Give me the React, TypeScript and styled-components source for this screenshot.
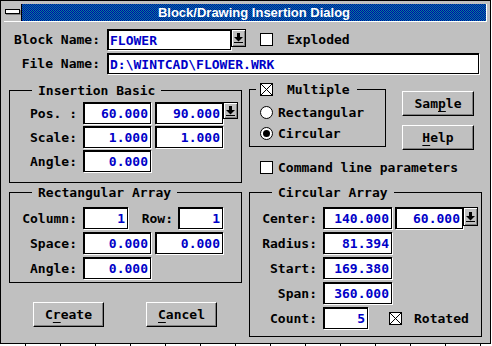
import styled, { createGlobalStyle } from "styled-components";

const GlobalStyle = createGlobalStyle`
  html, body {
    margin: 0;
    padding: 0;
    background: #ffffff;
  }
  body {
    font-family: "DejaVu Sans Mono", "Liberation Mono", monospace;
    font-weight: bold;
    font-size: 13px;
    color: #000;
  }
`;

const Window = styled.div`
  box-sizing: border-box;
  width: 491px;
  height: 344px;
  padding: 3px;
  background: #c0c0c0;
  border: 1px solid #000;
  display: flex;
  flex-direction: column;
`;

// ruler ticks of the app window behind the dialog
const Ruler = styled.div`
  width: 491px;
  height: 2px;
  background: repeating-linear-gradient(
    90deg,
    transparent 0 25px,
    #000 25px 26px,
    transparent 26px 35px
  );
`;

const TitleBar = styled.div`
  display: flex;
  height: 18px;
  box-sizing: border-box;
  border-right: 1px solid #fff;
  border-bottom: 1px solid #fff;
`;

const SysButton = styled.div`
  width: 18px;
  flex: none;
  background: #c0c0c0;
  border-right: 1px solid #000;
  box-sizing: border-box;
  display: flex;
  align-items: center;
  justify-content: center;
  padding-bottom: 2px;
`;

const SysBar = styled.div`
  width: 13px;
  height: 3px;
  background: #fff;
  border: 1px solid #000;
  box-shadow: 1px 1px 0 #808080;
`;

const Caption = styled.div`
  flex: 1;
  display: flex;
  align-items: center;
  justify-content: center;
  color: #fff;
  font-family: "Liberation Sans", Arial, sans-serif;
  font-weight: bold;
  font-size: 13px;
  background-color: #0000b0;
  background-image: conic-gradient(
    #008890 25%,
    transparent 0 50%,
    #008890 0 75%,
    transparent 0
  );
  background-size: 2px 2px;
`;

const Body = styled.div`
  flex: 1;
  padding-top: 7px;
  display: flex;
  flex-direction: column;
`;

const TopRow = styled.div`
  display: flex;
  align-items: flex-start;
  height: 21px;
  & + & {
    margin-top: 3px;
  }
`;

const Label = styled.div<{ $w: number; $gap?: number }>`
  width: ${(p) => p.$w}px;
  margin-right: ${(p) => p.$gap ?? 6}px;
  text-align: right;
  white-space: pre;
  flex: none;
  align-self: center;
`;

const Field = styled.div<{ $w: number; $right?: boolean }>`
  box-sizing: border-box;
  width: ${(p) => p.$w}px;
  height: 100%;
  flex: none;
  background: #fff;
  color: #0000c8;
  border: 1px solid #000;
  box-shadow: inset 1px 1px 0 #000, 1px 1px 0 #fff;
  display: flex;
  align-items: center;
  justify-content: ${(p) => (p.$right ? "flex-end" : "flex-start")};
  padding: ${(p) => (p.$right ? "1px 2px 0 0" : "1px 0 0 2px")};
  white-space: pre;
`;

const DropButton = styled.div<{ $h?: number }>`
  box-sizing: border-box;
  width: 15px;
  height: ${(p) => p.$h ?? 18}px;
  flex: none;
  background: #c0c0c0;
  border: 1px solid #000;
  box-shadow: inset 1px 1px 0 #fff, inset -1px -1px 0 #808080;
  display: flex;
  align-items: center;
  justify-content: center;
`;

const Box = styled.span<{ $ml?: number }>`
  box-sizing: border-box;
  width: 13px;
  height: 13px;
  flex: none;
  background: #fff;
  border: 1px solid #000;
  margin-left: ${(p) => p.$ml ?? 0}px;
  display: inline-flex;
  align-self: center;
`;

const BoxText = styled.span<{ $ml: number }>`
  margin-left: ${(p) => p.$ml}px;
  align-self: center;
  white-space: pre;
`;

const Radio = styled.span<{ $on?: boolean }>`
  box-sizing: border-box;
  width: 13px;
  height: 13px;
  flex: none;
  border-radius: 50%;
  background: #fff;
  border: 1px solid #000;
  display: inline-flex;
  align-items: center;
  justify-content: center;
  &::after {
    content: "";
    width: 7px;
    height: 7px;
    border-radius: 50%;
    background: ${(p) => (p.$on ? "#000" : "transparent")};
  }
`;

const Columns = styled.div`
  display: flex;
  margin-top: 8px;
  padding-left: 5px;
  gap: 7px;
`;

const LeftCol = styled.div`
  width: 233px;
  display: flex;
  flex-direction: column;
`;

const RightCol = styled.div`
  width: 233px;
  display: flex;
  flex-direction: column;
`;

const Group = styled.fieldset<{ $mt?: number; $w?: number }>`
  margin: ${(p) => p.$mt ?? 0}px 0 0 0;
  padding: 0;
  min-width: 0;
  width: ${(p) => (p.$w ? `${p.$w}px` : "auto")};
  box-sizing: border-box;
  border: 1px solid #000;
`;

const Legend = styled.legend<{ $ml?: number }>`
  margin-left: ${(p) => p.$ml ?? 22}px;
  padding: 0 6px;
  line-height: 15px;
  height: 15px;
  display: flex;
  align-items: center;
  white-space: pre;
`;

const GroupBody = styled.div<{ $pt: number; $pb: number; $gap: number }>`
  display: flex;
  flex-direction: column;
  gap: ${(p) => p.$gap}px;
  padding-top: ${(p) => p.$pt}px;
  padding-bottom: ${(p) => p.$pb}px;
`;

const Row = styled.div<{ $h?: number; $gap?: number }>`
  display: flex;
  align-items: flex-start;
  height: ${(p) => p.$h ?? 22}px;
  gap: ${(p) => p.$gap ?? 0}px;
`;

const OptionRow = styled.div`
  display: flex;
  align-items: center;
  height: 16px;
  padding-left: 10px;
  gap: 5px;
`;

const PushButton = styled.button<{ $w: number }>`
  box-sizing: border-box;
  width: ${(p) => p.$w}px;
  height: 25px;
  padding: 0;
  background: #c0c0c0;
  font: inherit;
  color: #000;
  border-top: 1px solid #fff;
  border-left: 1px solid #fff;
  border-right: 1px solid #000;
  border-bottom: 1px solid #000;
  box-shadow: inset -1px -1px 0 #808080;
  u {
    text-underline-offset: 3px;
  }
`;

const ButtonRow = styled.div`
  display: flex;
  gap: 42px;
  margin-top: 19px;
  padding-left: 24px;
`;

const TopSection = styled.div`
  display: flex;
  align-items: flex-start;
`;

const SideButtons = styled.div`
  display: flex;
  flex-direction: column;
  gap: 9px;
  margin: 9px 0 0 16px;
`;

const CmdRow = styled.div`
  display: flex;
  height: 13px;
  margin-top: 11px;
  padding-left: 11px;
`;

function DropGlyph() {
  return (
    <svg width="9" height="10" viewBox="0 0 9 10">
      <rect x="3" y="0" width="3" height="4" fill="#000" />
      <polygon points="0,4 9,4 4.5,8.5" fill="#000" />
      <rect x="0" y="9" width="9" height="1" fill="#000" />
    </svg>
  );
}

function Cross() {
  return (
    <svg width="11" height="11" viewBox="0 0 11 11">
      <path d="M0 0L11 11M11 0L0 11" stroke="#000" strokeWidth="1" />
    </svg>
  );
}

export default function App() {
  return (
    <>
      <GlobalStyle />
      <Window>
        <TitleBar>
          <SysButton>
            <SysBar />
          </SysButton>
          <Caption>Block/Drawing Insertion Dialog</Caption>
        </TitleBar>
        <Body>
          <TopRow>
            <Label $w={96} $gap={7}>Block Name:</Label>
            <Field $w={124}>FLOWER</Field>
            <DropButton>
              <DropGlyph />
            </DropButton>
            <Box $ml={14} />
            <BoxText $ml={14}>Exploded</BoxText>
          </TopRow>
          <TopRow>
            <Label $w={96} $gap={7}>File Name:</Label>
            <Field $w={372}>D:\WINTCAD\FLOWER.WRK</Field>
          </TopRow>

          <Columns>
            <LeftCol>
              <Group $mt={1}>
                <Legend>Insertion Basic</Legend>
                <GroupBody $pt={4} $pb={10} $gap={2}>
                  <Row>
                    <Label $w={67}>Pos. :</Label>
                    <Field $w={68} $right>60.000</Field>
                    <Field $w={68} $right style={{ marginLeft: 4 }}>90.000</Field>
                    <DropButton $h={17}>
                      <DropGlyph />
                    </DropButton>
                  </Row>
                  <Row>
                    <Label $w={67}>Scale:</Label>
                    <Field $w={68} $right>1.000</Field>
                    <Field $w={68} $right style={{ marginLeft: 4 }}>1.000</Field>
                  </Row>
                  <Row>
                    <Label $w={67}>Angle:</Label>
                    <Field $w={68} $right>0.000</Field>
                  </Row>
                </GroupBody>
              </Group>

              <Group $mt={2}>
                <Legend>Rectangular Array</Legend>
                <GroupBody $pt={7} $pb={3} $gap={3}>
                  <Row>
                    <Label $w={67}>Column:</Label>
                    <Field $w={45} $right>1</Field>
                    <Label $w={45} $gap={5}>Row:</Label>
                    <Field $w={45} $right>1</Field>
                  </Row>
                  <Row>
                    <Label $w={67}>Space:</Label>
                    <Field $w={68} $right>0.000</Field>
                    <Field $w={68} $right style={{ marginLeft: 4 }}>0.000</Field>
                  </Row>
                  <Row>
                    <Label $w={67}>Angle:</Label>
                    <Field $w={68} $right>0.000</Field>
                  </Row>
                </GroupBody>
              </Group>

              <ButtonRow>
                <PushButton $w={71}>
                  C<u>r</u>eate
                </PushButton>
                <PushButton $w={71}>
                  <u>C</u>ancel
                </PushButton>
              </ButtonRow>
            </LeftCol>

            <RightCol>
              <TopSection>
                <Group $w={137}>
                  <Legend $ml={6} style={{ paddingLeft: 4, paddingRight: 7 }}>
                    <Box>
                      <Cross />
                    </Box>
                    <BoxText $ml={14}>Multiple</BoxText>
                  </Legend>
                  <GroupBody $pt={7} $pb={5} $gap={5}>
                    <OptionRow>
                      <Radio />
                      Rectangular
                    </OptionRow>
                    <OptionRow>
                      <Radio $on />
                      Circular
                    </OptionRow>
                  </GroupBody>
                </Group>
                <SideButtons>
                  <PushButton $w={72}>
                    Sam<u>p</u>le
                  </PushButton>
                  <PushButton $w={72}>
                    <u>H</u>elp
                  </PushButton>
                </SideButtons>
              </TopSection>

              <CmdRow>
                <Box />
                <BoxText $ml={5}>Command line parameters</BoxText>
              </CmdRow>

              <Group $mt={11}>
                <Legend $ml={22}>Circular Array</Legend>
                <GroupBody $pt={7} $pb={7} $gap={3}>
                  <Row>
                    <Label $w={67}>Center:</Label>
                    <Field $w={69} $right>140.000</Field>
                    <Field $w={68} $right style={{ marginLeft: 3 }}>60.000</Field>
                    <DropButton $h={19}>
                      <DropGlyph />
                    </DropButton>
                  </Row>
                  <Row>
                    <Label $w={67}>Radius:</Label>
                    <Field $w={69} $right>81.394</Field>
                  </Row>
                  <Row>
                    <Label $w={67}>Start:</Label>
                    <Field $w={69} $right>169.380</Field>
                  </Row>
                  <Row>
                    <Label $w={67}>Span:</Label>
                    <Field $w={69} $right>360.000</Field>
                  </Row>
                  <Row>
                    <Label $w={67}>Count:</Label>
                    <Field $w={45} $right>5</Field>
                    <Box $ml={21}>
                      <Cross />
                    </Box>
                    <BoxText $ml={12}>Rotated</BoxText>
                  </Row>
                </GroupBody>
              </Group>
            </RightCol>
          </Columns>
        </Body>
      </Window>
      <Ruler />
    </>
  );
}
